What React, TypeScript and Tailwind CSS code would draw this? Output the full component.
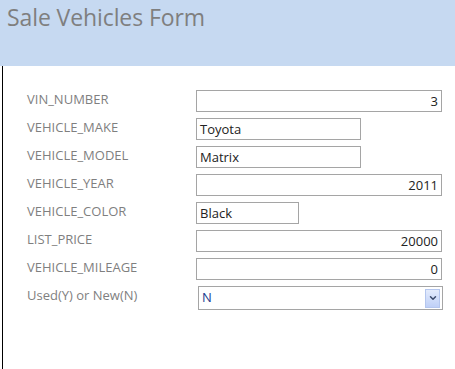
import { ChevronDown } from 'lucide-react';

type Field = {
  label: string;
  value: string;
  width: string;
  align: 'left' | 'right';
};

const fields: Field[] = [
  { label: 'VIN_NUMBER', value: '3', width: 'w-[246px]', align: 'right' },
  { label: 'VEHICLE_MAKE', value: 'Toyota', width: 'w-[165px]', align: 'left' },
  { label: 'VEHICLE_MODEL', value: 'Matrix', width: 'w-[165px]', align: 'left' },
  { label: 'VEHICLE_YEAR', value: '2011', width: 'w-[246px]', align: 'right' },
  { label: 'VEHICLE_COLOR', value: 'Black', width: 'w-[103px]', align: 'left' },
  { label: 'LIST_PRICE', value: '20000', width: 'w-[246px]', align: 'right' },
  { label: 'VEHICLE_MILEAGE', value: '0', width: 'w-[246px]', align: 'right' },
];

export default function App() {
  return (
    <div className="w-[455px] h-[369px] bg-white overflow-hidden font-['Open_Sans','Noto_Sans',sans-serif]">
      {/* Form header */}
      <div className="h-[66px] bg-[#c6d9f1] pl-[7px]">
        <h1 className="text-[23px] leading-[34px] text-[#7f7f7f] tracking-[-0.1px]">Sale Vehicles Form</h1>
      </div>

      {/* Detail section */}
      <div className="ml-[2px] h-[303px] border-l border-black pt-[24px] pl-[24px]">
        <div className="flex flex-col gap-[6px]">
          {fields.map((f) => (
            <div key={f.label} className="flex items-center h-[22px]">
              <span className="w-[169px] -mt-[2px] text-[13px] text-[#7f7f7f]">{f.label}</span>
              <div
                className={`${f.width} h-[22px] border border-[#a5a5a5] px-[3px] text-[13px] leading-[20px] text-[#222] ${
                  f.align === 'right' ? 'text-right' : 'text-left'
                }`}
              >
                {f.value}
              </div>
            </div>
          ))}
          <div className="flex items-center h-[24px]">
            <span className="w-[171px] -mt-[4px] text-[13px] text-[#7f7f7f]">Used(Y) or New(N)</span>
            <div className="w-[245px] h-[24px] border border-[#a5a5a5] flex items-center justify-between pl-[3px] pr-[2px]">
              <span className="text-[13px] text-[#1a3d8f]">N</span>
              <span className="w-[15px] h-[19px] bg-gradient-to-b from-[#e3ebfc] to-[#bfd0f7] border border-[#b4c6ee] flex items-center justify-center">
                <ChevronDown className="w-[10px] h-[10px] text-[#3a4a6b]" strokeWidth={3.5} />
              </span>
            </div>
          </div>
        </div>
      </div>
    </div>
  );
}
